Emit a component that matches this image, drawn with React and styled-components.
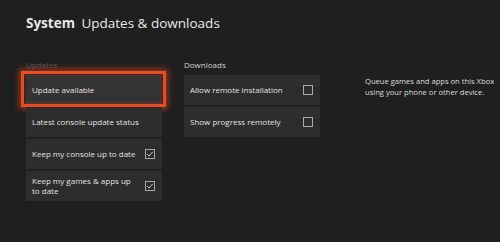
import styled, { createGlobalStyle } from "styled-components";

const Global = createGlobalStyle`
  html, body { margin: 0; padding: 0; background: #1f1f1f; }
  body { font-family: "Open Sans", "Noto Sans", sans-serif; }
`;

const Screen = styled.div`
  width: 500px;
  height: 242px;
  background: #1f1f1f;
  color: #e6e6e6;
  padding: 14px 0 0 26px;
  box-sizing: border-box;
  overflow: hidden;
`;

const Header = styled.h1`
  margin: 0;
  font-size: 13.5px;
  font-weight: 400;
  color: #e8e8e8;
  line-height: 18px;
  b { font-weight: 700; margin-right: 3px; }
`;

const Columns = styled.div`
  display: flex;
  margin-top: 28px;
`;

const Column = styled.div`
  width: 136px;
  margin-right: ${(p) => p.gap || 0}px;
  display: flex;
  flex-direction: column;
  gap: 2px;
`;

const Label = styled.div`
  font-size: 8px;
  color: ${(p) => (p.dim ? "#555" : "#d0d0d0")};
  height: 10px;
  line-height: 10px;
  margin-bottom: 3px;
`;

const Tile = styled.div`
  position: relative;
  height: 30px;
  background: ${(p) => (p.focus ? "#333" : "#2d2d2d")};
  display: flex;
  align-items: center;
  justify-content: space-between;
  padding: 0 7px 0 6px;
  box-sizing: border-box;
  font-size: 8px;
  line-height: 10px;
  color: #e2e2e2;
  span { max-width: ${(p) => (p.wrap ? "100px" : "none")}; }
  ${(p) =>
    p.focus &&
    `
    &::after {
      content: "";
      position: absolute;
      inset: -4px -4px -2px -5px;
      border: 3.5px solid #ec4a23;
      box-shadow: 0 0 6px 2px rgba(236, 74, 35, 0.55), inset 0 0 4px rgba(236, 74, 35, 0.4);
    }
  `}
`;

const Box = styled.div`
  width: 10px;
  height: 10px;
  border: 1px solid #a8a8a8;
  box-sizing: border-box;
  flex: none;
  display: flex;
  align-items: center;
  justify-content: center;
`;

const Note = styled.div`
  margin-top: 16px;
  font-size: 7.6px;
  line-height: 11px;
  color: #dcdcdc;
  width: 132px;
`;

const Check = ({ on }) => (
  <Box>
    {on && (
      <svg width="8" height="8" viewBox="0 0 8 8">
        <path d="M1.2 4.2 L3 6 L6.8 1.8" fill="none" stroke="#d8d8d8" strokeWidth="0.9" />
      </svg>
    )}
  </Box>
);

export default function App() {
  return (
    <Screen>
      <Global />
      <Header>
        <b>System</b> Updates &amp; downloads
      </Header>
      <Columns>
        <Column gap={22}>
          <Label dim>Updates</Label>
          <Tile focus>
            <span>Update available</span>
          </Tile>
          <Tile>
            <span>Latest console update status</span>
          </Tile>
          <Tile>
            <span>Keep my console up to date</span>
            <Check on />
          </Tile>
          <Tile wrap>
            <span>Keep my games &amp; apps up to date</span>
            <Check on />
          </Tile>
        </Column>
        <Column gap={45}>
          <Label>Downloads</Label>
          <Tile>
            <span>Allow remote installation</span>
            <Check />
          </Tile>
          <Tile>
            <span>Show progress remotely</span>
            <Check />
          </Tile>
        </Column>
        <Note>Queue games and apps on this Xbox using your phone or other device.</Note>
      </Columns>
    </Screen>
  );
}
